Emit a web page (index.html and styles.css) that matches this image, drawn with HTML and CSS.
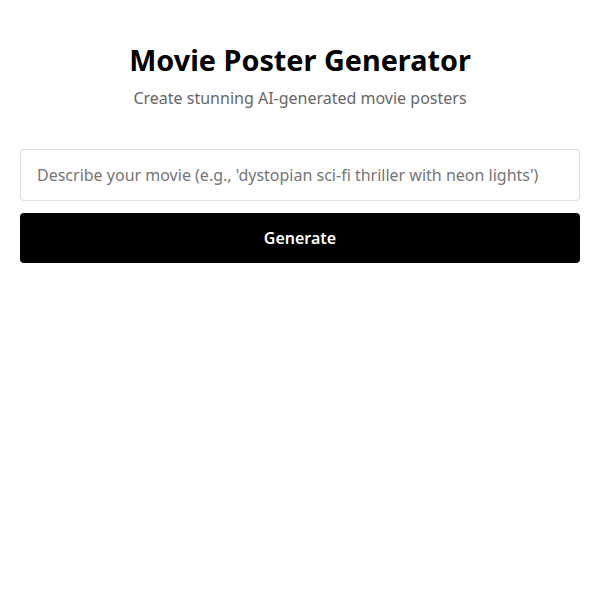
FILE: index.html
```html
<!DOCTYPE html>
<html lang="en">
<head>
<meta charset="utf-8">
<title>Movie Poster Generator</title>
<link rel="stylesheet" href="styles.css">
</head>
<body>
<div class="container">
  <h1 class="title">Movie Poster Generator</h1>
  <p class="subtitle">Create stunning AI-generated movie posters</p>
  <form class="form">
    <input class="prompt" type="text" placeholder="Describe your movie (e.g., 'dystopian sci-fi thriller with neon lights')">
    <button class="generate" type="button">Generate</button>
  </form>
</div>
</body>
</html>
```

FILE: styles.css
```css
* { box-sizing: border-box; }
html, body { margin: 0; padding: 0; background: #fff; }
body { font-family: "Noto Sans", "Open Sans", sans-serif; color: #000; }
.container { padding: 40px 20px; display: flex; flex-direction: column; }
.title { margin: 0; text-align: center; font-size: 28.8px; font-weight: 700; line-height: 39.6px; }
.subtitle { margin: 6px 0 0; text-align: center; font-size: 16px; color: #666; line-height: 24px; }
.form { margin-top: 39px; display: flex; flex-direction: column; gap: 12px; }
.prompt { height: 52px; padding: 0 16px; border: 1px solid #ddd; border-radius: 4px; font-family: inherit; font-size: 16px; color: #000; outline: none; }
.prompt::placeholder { color: #757575; }
.generate { height: 50px; border: 0; border-radius: 4px; background: #000; color: #fff; font-family: inherit; font-size: 16px; font-weight: 600; cursor: pointer; }
```
